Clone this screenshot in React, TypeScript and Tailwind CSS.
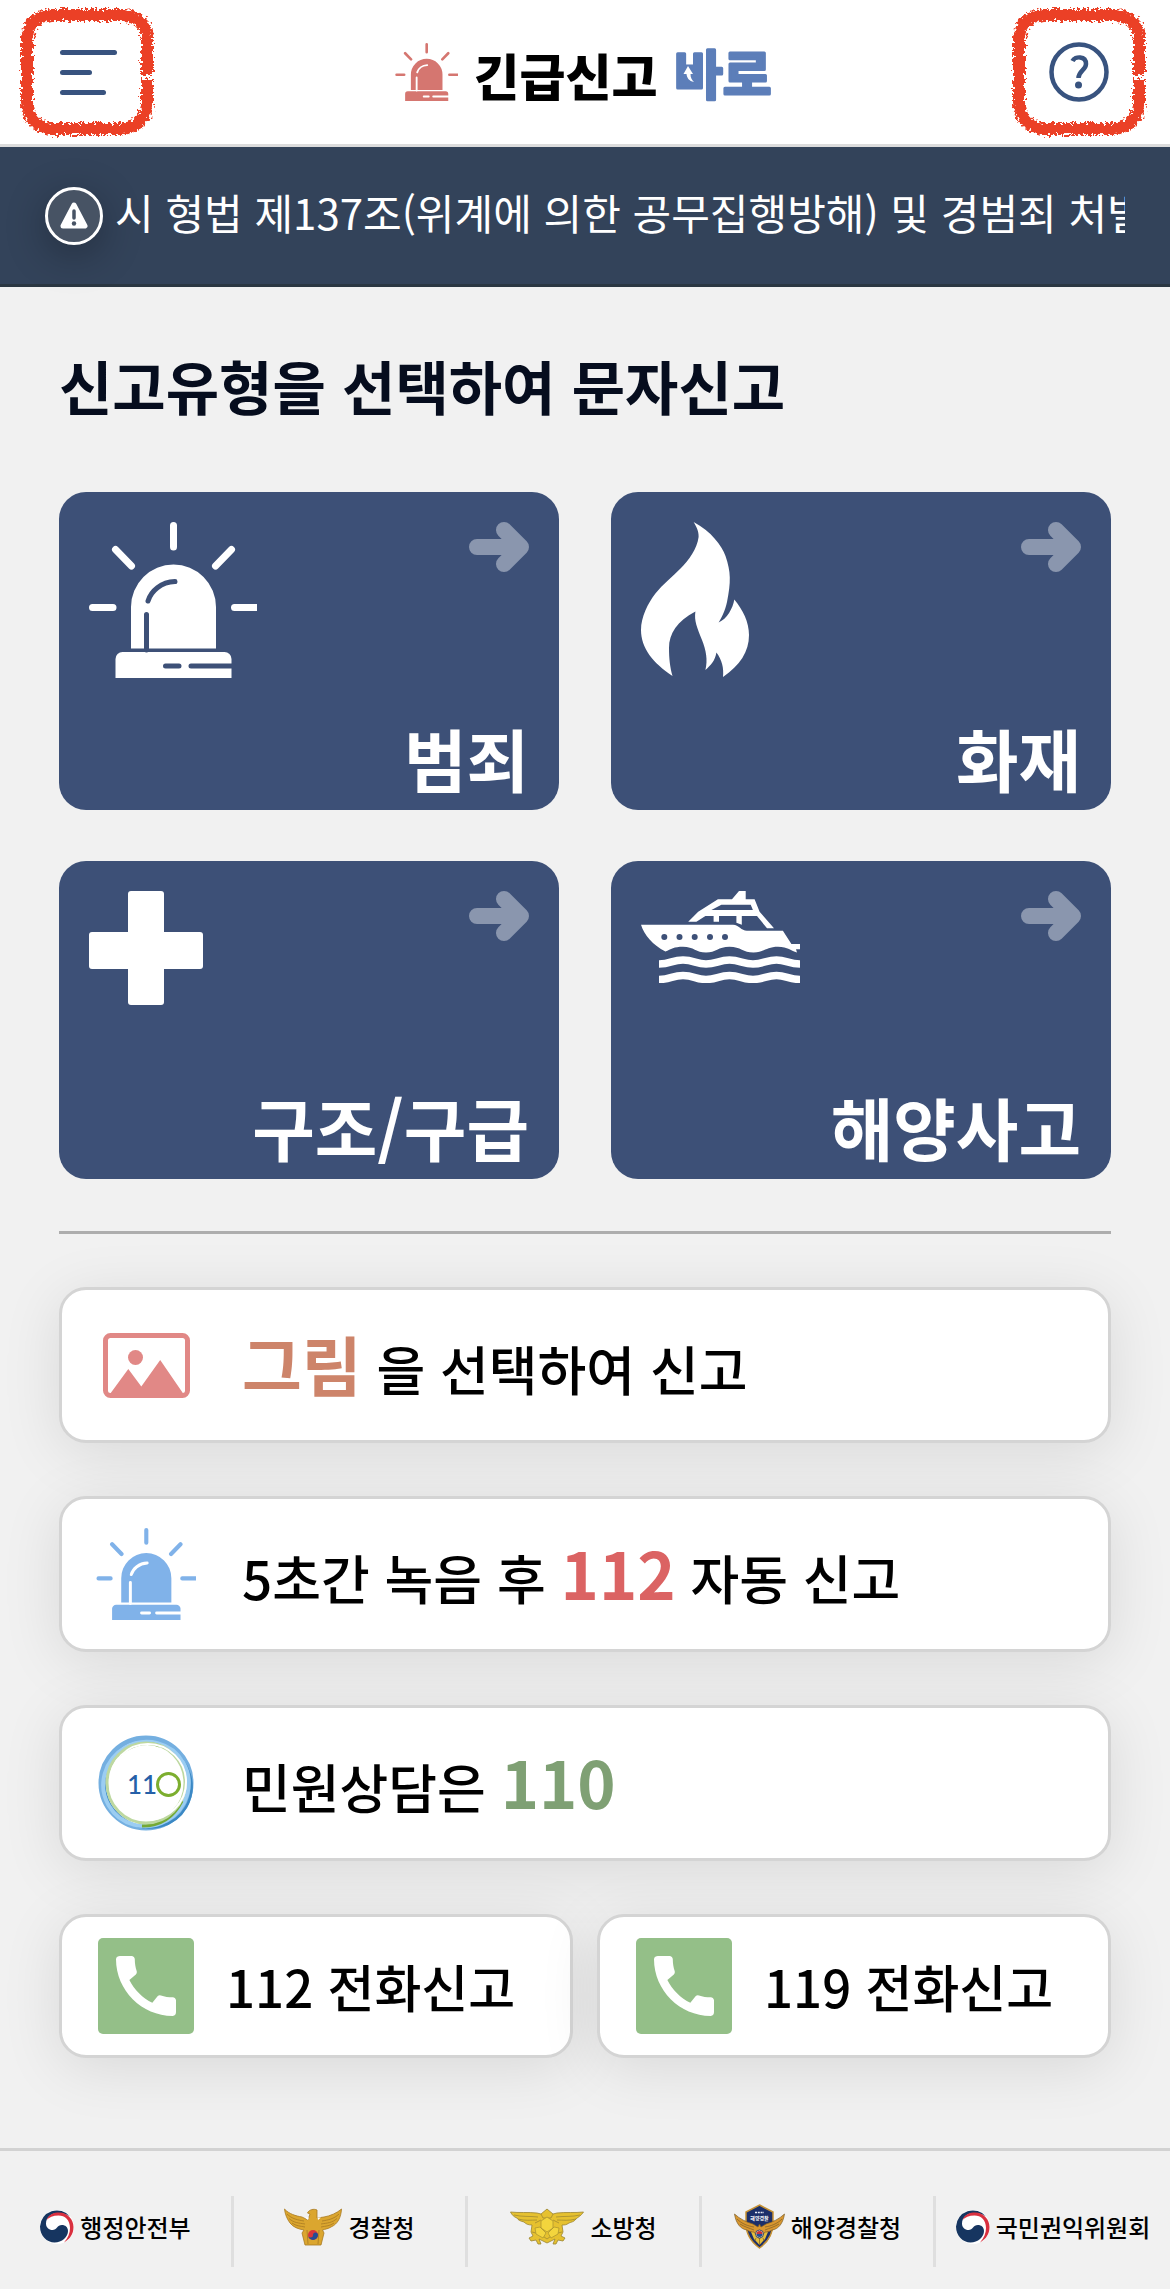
import type { ReactNode } from "react";
import { MdCall } from "react-icons/md";

function ChalkRing() {
  return (
    <svg viewBox="0 0 134 130" className="pointer-events-none absolute inset-0 h-full w-full overflow-visible" aria-hidden="true">
      <defs>
        <filter id="chalk" x="-10%" y="-10%" width="120%" height="120%">
          <feTurbulence type="fractalNoise" baseFrequency="0.35" numOctaves="3" seed="4" result="noise" />
          <feDisplacementMap in="SourceGraphic" in2="noise" scale="10" xChannelSelector="R" yChannelSelector="G" />
        </filter>
      </defs>
      <g filter="url(#chalk)" fill="none" stroke="#eb4126" strokeLinejoin="round">
        <path
          strokeWidth="12"
          d="M127 68 V30 Q125 9 102 8 H32 Q9 9 7 32 V96 Q9 120 32 122 H100 Q125 120 127 98 V72"
        />
      </g>
    </svg>
  );
}

function Siren({ className, cut }: { className: string; cut: string }) {
  return (
    <svg viewBox="0 0 168 156" className={className} aria-hidden="true">
      <g stroke="currentColor" strokeWidth="7" strokeLinecap="round">
        <path d="M84.5 3.5V25M26.5 27.5l16 16.5M142.5 27.5l-16 16.5M3.5 85.5H24M145.5 85.5H170" />
      </g>
      <path fill="currentColor" d="M42 126.5V85a42.5 42.5 0 0 1 85 0v41.5z" />
      <path fill="currentColor" d="M26.5 156v-19a7 7 0 0 1 7-7h102a7 7 0 0 1 7 7v19z" />
      <g fill="none" stroke={cut} strokeWidth="5" strokeLinecap="round">
        <path d="M86 59.5C72 60 62 69 59 79M57.5 92.5V128M76.5 144H90M102 144H144" />
      </g>
    </svg>
  );
}

function Flame() {
  return (
    <svg viewBox="0 0 108 155" className="h-[155px] w-[108px]" aria-hidden="true">
      <path
        fill="currentColor"
        d="M52.6 0C70 9 81 24 84.5 34C90 50 90 60 86 80C84 89 81 95 77.6 100.5C86 97 92 86 93.3 77.5C102 88 108 100 108 113C108 130 99 143 82 155C83 146 81 138 75.4 130.5C74 139 70 143 64.4 148C67 138 65 128 61 118C56 105 53 99 54.4 89.5C36 99 28 112 28 126C28 137 29 145 31.5 154C12 141 0 126 0 108C0 95 7 81 14.4 71.5C22 62 31 55 39.5 46.5C48 38 56 27 57.6 15C58 9 55 4 52.6 0Z"
      />
    </svg>
  );
}

function Cross() {
  return (
    <svg viewBox="0 0 114 114" className="size-[114px]" fill="currentColor" aria-hidden="true">
      <rect x="39" width="36" height="114" rx="3" />
      <rect y="41" width="114" height="37" rx="3" />
    </svg>
  );
}

function Yacht() {
  return (
    <svg viewBox="0 0 159 92" className="h-[92px] w-[159px]" aria-hidden="true">
      <path
        fill="currentColor"
        fillRule="evenodd"
        d="M98 0H104.7V8.3H113.6L118.6 20.7L133 37.3H126L116 25H100.8V33.7L95.4 31.7V25H78V30.7H72.6V25H64.4L55.4 30.7H47.2L57.2 20.7L76.9 8.3H91ZM70.4 19H111.9L109.7 13.7H80.4Z"
      />
      <path
        fill="currentColor"
        d="M0 33.7H92C98 34 100 39.7 106 39.7H141.9L150.4 53H159V58.3H155L156 61.5C150 60 147 55.7 137 55.7C125 55.7 123 61.5 112.5 61.5C102 61.5 100 55.7 88.5 55.7C77 55.7 75 61.5 65 61.5C55 61.5 53 55.7 42 55.7C33 55.7 30 58 24.4 60.5C12 54 3 44 0 33.7Z"
      />
      <g fill="none" stroke="currentColor" strokeWidth="7.5">
        <path d="M18 73C30 73 31 69 42 69S55 73 65 73S78 69 88.5 69S102 73 112 73S126 69 135.5 69S148 73 159 73" />
        <path d="M18 88.5C30 88.5 31 84.5 42 84.5S55 88.5 65 88.5S78 84.5 88.5 84.5S102 88.5 112 88.5S126 84.5 135.5 84.5S148 88.5 159 88.5" />
      </g>
      <g fill="#3d5077">
        {[23.3, 38.5, 53.7, 69, 84].map((x) => (
          <circle key={x} cx={x} cy="46" r="3" />
        ))}
      </g>
    </svg>
  );
}

function Arrow() {
  return (
    <svg viewBox="0 0 60 50" className="h-[50px] w-[60px] shrink-0 text-[#8a96ae]" fill="none" stroke="currentColor" strokeWidth="16" strokeLinecap="round" strokeLinejoin="round" aria-hidden="true">
      <path d="M8 25H50M35 8L52 25L35 42" />
    </svg>
  );
}

function Picture() {
  return (
    <svg viewBox="0 0 87 65" className="h-[65px] w-[87px]" fill="#e18886" aria-hidden="true">
      <rect x="2.5" y="2.5" width="82" height="60" rx="5" fill="none" stroke="#e18886" strokeWidth="5" />
      <circle cx="32.5" cy="24.5" r="7.5" />
      <path d="M7 61L25.3 36L38.3 53.5L57.2 27L80.5 61Z" />
    </svg>
  );
}

function Logo110() {
  return (
    <svg viewBox="0 0 96 96" className="size-24" fill="none" aria-hidden="true">
      <ellipse cx="48" cy="48" rx="45" ry="45" stroke="#74afe0" strokeWidth="5" />
      <ellipse cx="50" cy="50" rx="44" ry="42" stroke="#3b88c4" strokeWidth="2.5" transform="rotate(30 50 50)" />
      <ellipse cx="48" cy="49" rx="43" ry="42" stroke="#9bcdf2" strokeWidth="4" transform="rotate(-30 48 49)" />
      <path d="M20 22C30 10 48 5 62 11" stroke="#74a935" strokeWidth="3" />
      <path d="M84 66C76 82 62 91 44 91" stroke="#74a935" strokeWidth="3" />
      <ellipse cx="48" cy="48" rx="39" ry="40" stroke="#bdd8a0" strokeWidth="3" />
      <ellipse cx="50" cy="47" rx="38" ry="38" stroke="#ffffff" strokeWidth="2" />
      <text x="29" y="59" fontFamily="Lato, sans-serif" fontSize="26" fill="#2560a8">
        11
      </text>
      <circle cx="70.5" cy="49.5" r="11" stroke="#7cae2e" strokeWidth="3" />
    </svg>
  );
}

function Taegeuk() {
  return (
    <svg viewBox="0 0 34 34" className="size-[34px] shrink-0" aria-hidden="true">
      <circle cx="17" cy="17" r="17" fill="#ffffff" />
      <path fill="#163560" d="M30 6.5A17 17 0 0 0 0 16.5C0 26 7 32.5 14.5 32.5C22 32.5 28 27 28 21C28 17 25 15 22 15C17 15 17 20 12.5 20C9 20 6 17.5 6 13.5C6 7 12 3 18 3C23 3 27 4.5 30 6.5Z" />
      <path fill="#d9303f" d="M6.5 10C9 4 14 2.5 19 2.5C28 2.5 33.5 10 33.5 17C33.5 24 30 29 24 32.5C28 28 30 23 30 18C30 10 25 5.5 18.5 5.5C13 5.5 9 7.5 6.5 10Z" />
    </svg>
  );
}

function PoliceEagle() {
  return (
    <svg viewBox="0 0 58 38" className="h-[38px] w-[58px] shrink-0" aria-hidden="true">
      <path
        fill="#dba62f"
        stroke="#a87a22"
        strokeWidth="0.8"
        strokeLinejoin="round"
        d="M0.5 1C5 6 12 8 18 9L24 12L26 6L23.5 5C25 1.5 30 0.5 33 2V10L40 9C46 8 53 5 57.5 1C57 9 54 16 47 19C44 21 41 21 38.5 22L40 25L37 37H21L18 25L20 22C14 21 9 19 6 15C3 11 1 6 0.5 1Z"
      />
      <g fill="none" stroke="#a87a22" strokeWidth="0.8">
        <path d="M3 6C8 11 14 12 20 13M5 10.5C10 15 15 15 21 16M8 15C12 18 16 18 21 19M55 6C50 11 44 12 38 13M53 10.5C48 15 43 15 37 16M50 15C46 18 42 18 37 19M23 22L24 36M35 22L34 36" />
      </g>
      <path fill="#fff" d="M21 9.5L25 9.5L24 12ZM33.5 9.5H37L34 12Z" />
      <circle cx="29" cy="27" r="5" fill="#d8383a" />
      <path fill="#244c94" d="M24 27A5 5 0 0 0 34 27A2.5 2.5 0 0 0 29 27A2.5 2.5 0 0 1 24 27Z" />
    </svg>
  );
}

function FireEagle() {
  return (
    <svg viewBox="0 0 74 38" className="h-[38px] w-[74px] shrink-0" aria-hidden="true">
      <path
        fill="#e6c12f"
        stroke="#9a8430"
        strokeWidth="0.8"
        strokeLinejoin="round"
        d="M0.5 4C9 5 18 4 27 5L31 6L37 1L43 6L47 5C56 4 65 5 73.5 4C71 8 68 9 66 11C64 14 61 14 59 15C56 17 55 17 52 17L53 24L51 28L55 30L53 33L48 32L46 36L43 36L45 31L37 35L29 31L31 36L28 36L26 32L21 33L19 30L23 28L21 24L22 17C18 17 16 16 14 14C10 13 8 12 7 10C4 9 2 7 0.5 4Z"
      />
      <g fill="none" stroke="#9a8430" strokeWidth="0.7">
        <path d="M4 7C12 9 20 8 28 9M8 11C15 13 21 12 27 12M70 7C62 9 54 8 46 9M66 11C59 13 53 12 47 12M31 6L33 10H41L43 6M25 15L31 12M49 15L43 12M22 24L30 26M52 24L44 26M30 26L37 31L44 26" />
      </g>
      <path fill="#f3d53d" stroke="#a8902e" strokeWidth="0.7" d="M37 9L43 13V20L37 24L31 20V13ZM30 19L36 25L33 30L26 26L25 20ZM44 19L38 25L41 30L48 26L49 20Z" />
    </svg>
  );
}

function CoastBadge() {
  return (
    <svg viewBox="0 0 51 46" className="h-[46px] w-[51px] shrink-0" aria-hidden="true">
      <path fill="#1c2f69" stroke="#c79234" strokeWidth="1.5" d="M25.5 1L39 8V19C39 31 34 38 25.5 44C17 38 12 31 12 19V8Z" />
      <path fill="#e3bd3c" d="M17 28H34L31 35L25.5 41L20 35Z" />
      <path fill="#d9972f" stroke="#7d5d26" strokeWidth="0.7" d="M0.5 10C6 15 12 18 19 20L24 23L25.5 20L27 23L32 20C39 18 45 15 50.5 10C49 19 45 25 38 26C35 28 33 28 31 28L25.5 35L20 28C18 28 16 28 13 26C6 25 2 19 0.5 10Z" />
      <path fill="none" stroke="#7d5d26" strokeWidth="0.7" d="M3 15C8 20 14 22 20 23M6 20C11 23 15 24 20 26M48 15C43 20 37 22 31 23M45 20C40 23 36 24 31 26M22 34L21 37M25.5 35V41M29 34L30 37" />
      <circle cx="25.5" cy="30" r="4" fill="#ecd9a0" stroke="#1c2f69" strokeWidth="0.8" />
      <path fill="#c8323a" d="M22.5 30A3 3 0 0 1 28.5 30Z" />
      <path fill="#244c94" d="M22.5 30A3 3 0 0 0 28.5 30Z" />
      <path stroke="#e8ecf5" strokeWidth="1.3" strokeDasharray="2 0.8" d="M21 8.5H30" />
      <text x="25.5" y="16" textAnchor="middle" fontFamily="'Noto Sans CJK KR', sans-serif" fontWeight="700" fontSize="5" fill="#ffffff">
        해양경찰
      </text>
    </svg>
  );
}

const reportTypes: { label: string; icon: ReactNode }[] = [
  { label: "범죄", icon: <Siren className="h-[156px] w-[168px]" cut="#3d5077" /> },
  { label: "화재", icon: <Flame /> },
  { label: "구조/구급", icon: <Cross /> },
  { label: "해양사고", icon: <Yacht /> },
];

const agencies: { name: string; icon: ReactNode }[] = [
  { name: "행정안전부", icon: <Taegeuk /> },
  { name: "경찰청", icon: <PoliceEagle /> },
  { name: "소방청", icon: <FireEagle /> },
  { name: "해양경찰청", icon: <CoastBadge /> },
  { name: "국민권익위원회", icon: <Taegeuk /> },
];

const cardStyle =
  "flex items-center rounded-[27px] border-3 border-[#d4d4d4] bg-white text-left font-medium text-black shadow-[0_10px_60px_rgba(0,0,0,0.1)]";

function WideCard({ icon, children }: { icon: ReactNode; children: ReactNode }) {
  return (
    <button type="button" className={`${cardStyle} h-[156px] w-full gap-12 px-9`}>
      <span className="flex w-24 shrink-0 justify-center">{icon}</span>
      <span className="whitespace-nowrap text-[53px] leading-[96px]">{children}</span>
    </button>
  );
}

function CallCard({ number }: { number: string }) {
  return (
    <a href={`tel:${number}`} className={`${cardStyle} h-36 gap-8 px-9`}>
      <span className="flex size-24 shrink-0 items-center justify-center rounded-[5px] bg-[#94bf88]">
        <MdCall className="size-20 text-white" aria-hidden="true" />
      </span>
      <span className="whitespace-nowrap text-[51px] leading-[96px]">{number} 전화신고</span>
    </a>
  );
}

export default function App() {
  return (
    <div lang="ko" className="min-h-screen bg-[#f1f1f1] font-['Noto_Sans_CJK_KR','Noto_Sans',sans-serif]">
      <header className="flex h-[147px] items-center justify-between border-b-3 border-[#dcdcdc] bg-white pr-6 pl-5">
        <button type="button" aria-label="메뉴" className="relative flex h-[130px] w-[134px] flex-col justify-center gap-[15px] pl-10">
          <span className="h-[5px] w-[57px] rounded-full bg-[#38537f]" />
          <span className="h-[5px] w-8 rounded-full bg-[#38537f]" />
          <span className="h-[5px] w-[46px] rounded-full bg-[#38537f]" />
          <ChalkRing />
        </button>
        <h1 className="flex items-center gap-4">
          <Siren className="h-[58px] w-[63px] text-[#d57670]" cut="#ffffff" />
          <span className="pt-1 text-[50px] leading-[72px] font-black text-black">긴급신고</span>
          <svg viewBox="0 0 98 60" className="h-[60px] w-[98px] overflow-visible" role="img" aria-label="바로">
            <text x="0" y="53" fontFamily="'Noto Sans CJK KR', sans-serif" fontWeight="700" fontSize="53" fill="#5c7eb9" stroke="#5c7eb9" strokeWidth="3" strokeLinejoin="round">
              바로
            </text>
            <path fill="#5c7eb9" d="M6 24H24V44H6Z" />
            <path fill="#ffffff" d="M14 24L19 32H16.5C16.5 36 18 38 20 40C15 39 13 36 12.5 32H9.5Z" />
          </svg>
        </h1>
        <button type="button" aria-label="도움말" className="relative flex h-[130px] w-[134px] items-center justify-center">
          <svg viewBox="0 0 60 60" className="size-[60px]" fill="none" stroke="#38537f" aria-hidden="true">
            <circle cx="30" cy="30" r="27.5" strokeWidth="4.5" />
            <path d="M23.5 19C26 14 37 13.5 37 22C37 28 29.5 29 29.5 36" strokeWidth="4.5" />
            <circle cx="29.5" cy="43" r="3.5" fill="#38537f" stroke="none" />
          </svg>
          <ChalkRing />
        </button>
      </header>

      <div className="flex h-[140px] items-center gap-3 border-b-3 border-[#2b3742] bg-[#33435a] px-[45px] text-white">
        <span className="flex size-[58px] shrink-0 items-center justify-center rounded-full border-3 border-white bg-[#475364] shadow-[0_10px_40px_rgba(0,0,0,0.3)]">
          <svg viewBox="0 0 28 27" className="h-[27px] w-7" aria-hidden="true">
            <path d="M14 3L25 24H3Z" fill="#fff" stroke="#fff" strokeWidth="5" strokeLinejoin="round" />
            <path d="M14 9V16" stroke="#475364" strokeWidth="3.5" strokeLinecap="round" />
            <circle cx="14" cy="21.5" r="2.2" fill="#475364" />
          </svg>
        </span>
        <p className="min-w-0 flex-1 overflow-hidden whitespace-nowrap pb-2 text-[42px] leading-[64px]">
          시 형법 제137조(위계에 의한 공무집행방해) 및 경범죄 처벌
        </p>
      </div>

      <main className="px-[59px] pb-[90px]">
        <h2 className="pt-[52px] pb-[61px] text-[58px] leading-[92px] font-bold text-[#060d1e]">신고유형을 선택하여 문자신고</h2>

        <div className="grid grid-cols-2 gap-x-[52px] gap-y-[51px]">
          {reportTypes.map((type) => (
            <button
              key={type.label}
              type="button"
              className="flex h-[318px] flex-col justify-between rounded-[27px] bg-[#3d5077] px-[30px] pt-[30px] pb-1 text-white"
            >
              <span className="flex w-full items-start justify-between">
                {type.icon}
                <Arrow />
              </span>
              <span className="self-end text-[68px] leading-[96px] font-bold">{type.label}</span>
            </button>
          ))}
        </div>

        <hr className="mt-[52px] mb-[53px] border-t-3 border-[#adadad]" />

        <div className="grid gap-[53px]">
          <WideCard icon={<Picture />}>
            <b className="text-[65px] font-bold text-[#cd846a]">그림</b> 을 선택하여 신고
          </WideCard>
          <WideCard icon={<Siren className="h-[92px] w-[100px] shrink-0 text-[#80b2e9]" cut="#ffffff" />}>
            5초간 녹음 후 <b className="text-[65px] font-bold text-[#db6363]">112</b> 자동 신고
          </WideCard>
          <WideCard icon={<Logo110 />}>
            민원상담은 <b className="text-[65px] font-bold text-[#7fa074]">110</b>
          </WideCard>
          <div className="grid grid-cols-2 gap-6">
            <CallCard number="112" />
            <CallCard number="119" />
          </div>
        </div>
      </main>

      <footer className="grid grid-cols-5 border-t-3 border-[#d2d2d2] pt-[45px] pb-[22px]">
        {agencies.map((agency) => (
          <div
            key={agency.name}
            className="flex h-[71px] items-center justify-center gap-[6px] border-r-3 border-[#dfdfdf] pb-[10px] text-2xl font-medium whitespace-nowrap text-black last:border-r-0"
          >
            {agency.icon}
            {agency.name}
          </div>
        ))}
      </footer>
    </div>
  );
}
